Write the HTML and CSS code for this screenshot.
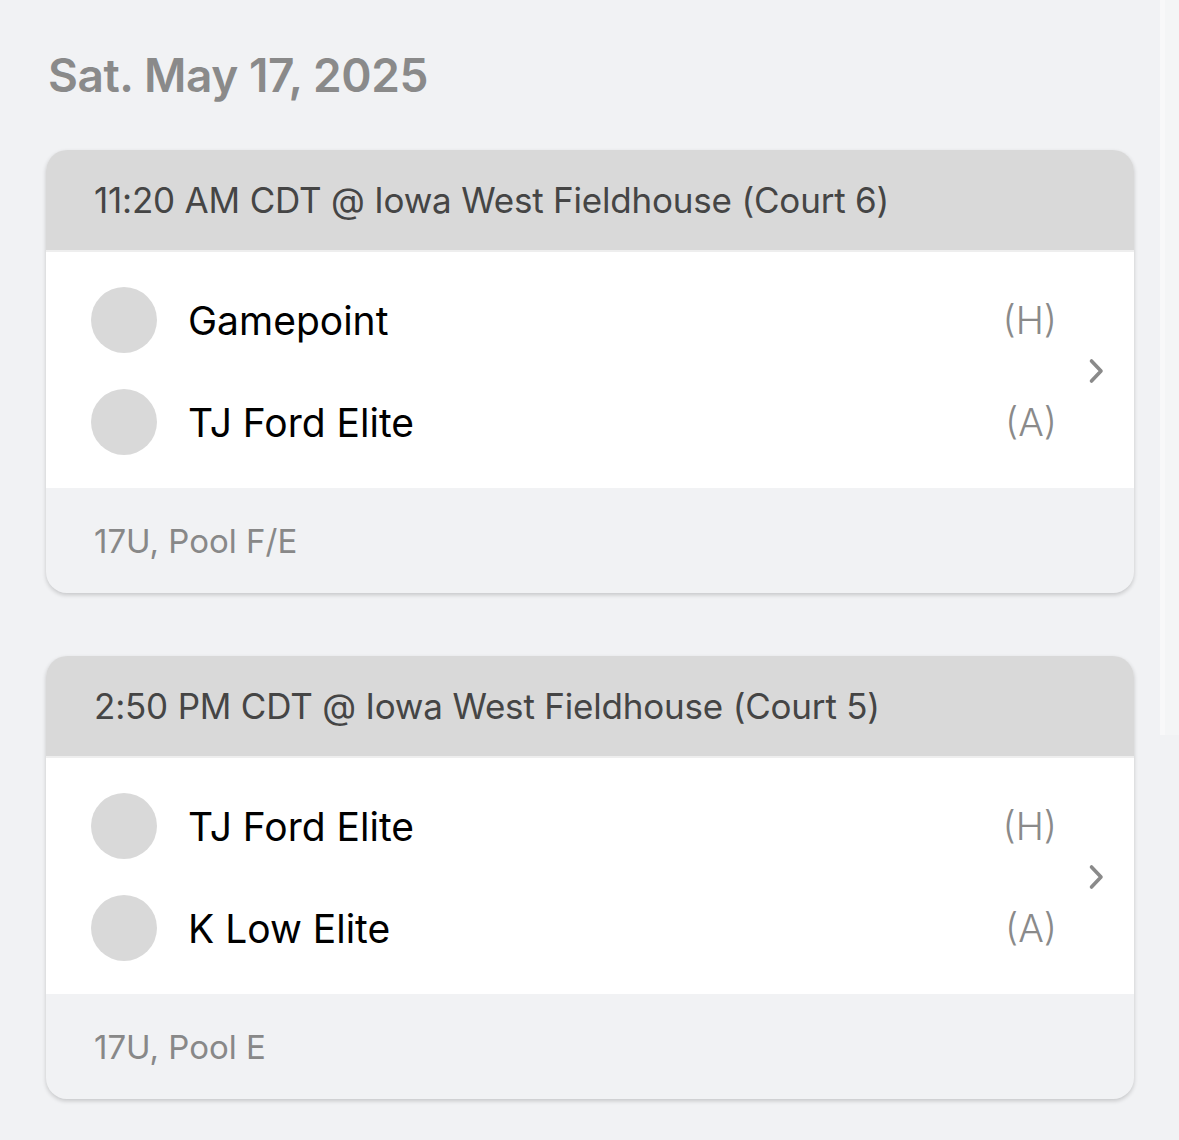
FILE: index.html
```html
<!DOCTYPE html>
<html lang="en">
<head>
    <meta charset="UTF-8">
    <link rel="stylesheet" href="styles.css">
</head>
<body>

    <div class="page">
        <div class="schedule">
            <h2 class="day">Sat. May 17, 2025</h2>

            <div class="game">
                <div class="game-head">11:20 AM CDT @ Iowa West Fieldhouse (Court 6)</div>
                <div class="game-body">
                    <div class="teams">
                        <div class="team">
                            <span class="logo"></span>
                            <span class="name">Gamepoint</span>
                            <span class="side">(H)</span>
                        </div>
                        <div class="team">
                            <span class="logo"></span>
                            <span class="name">TJ Ford Elite</span>
                            <span class="side">(A)</span>
                        </div>
                    </div>
                    <svg class="chevron" width="18" height="28" viewBox="0 0 18 28">
                        <path d="M4.5 4 L14 14 L4.5 24" fill="none" stroke="#8a8a8a" stroke-width="3.6" stroke-linecap="round" stroke-linejoin="round"/>
                    </svg>
                </div>
                <div class="game-foot">17U, Pool F/E</div>
            </div>

            <div class="game">
                <div class="game-head">2:50 PM CDT @ Iowa West Fieldhouse (Court 5)</div>
                <div class="game-body">
                    <div class="teams">
                        <div class="team">
                            <span class="logo"></span>
                            <span class="name">TJ Ford Elite</span>
                            <span class="side">(H)</span>
                        </div>
                        <div class="team">
                            <span class="logo"></span>
                            <span class="name">K Low Elite</span>
                            <span class="side">(A)</span>
                        </div>
                    </div>
                    <svg class="chevron" width="18" height="28" viewBox="0 0 18 28">
                        <path d="M4.5 4 L14 14 L4.5 24" fill="none" stroke="#8a8a8a" stroke-width="3.6" stroke-linecap="round" stroke-linejoin="round"/>
                    </svg>
                </div>
                <div class="game-foot">17U, Pool E</div>
            </div>
        </div>

        <div class="track"></div>
    </div>

</body>
</html>
```

FILE: styles.css
```css
        body {
            margin: 0;
            background-color: #f1f2f4;
            font-family: "Inter", "Lato", sans-serif;
        }

        .page {
            display: flex;
            align-items: flex-start;
        }

        .schedule {
            flex: 1;
            padding: 0 26px 20px 46px;
        }

        .track {
            width: 19px;
            height: 735px;
            background-color: #f4f5f6;
            border-left: 5px solid #f8f8f9;
            box-sizing: border-box;
        }

        .day {
            margin: 0;
            padding: 47px 0 0 2px;
            height: 150px;
            box-sizing: border-box;
            font-size: 46px;
            font-weight: 600;
            line-height: 56px;
            letter-spacing: -0.4px;
            color: #8a8a8a;
        }

        .game {
            background-color: #f1f2f4;
            border-radius: 21px;
            overflow: hidden;
            box-shadow: 0 2px 4px rgba(0, 0, 0, 0.18);
            margin-bottom: 63px;
        }

        .game:last-child {
            margin-bottom: 0;
        }

        .game-head {
            height: 100px;
            padding-left: 48px;
            display: flex;
            align-items: center;
            background-color: #d9d9d9;
            border-bottom: 2px solid #eeeeee;
            font-size: 35px;
            letter-spacing: -0.2px;
            color: #454545;
        }

        .game-body {
            display: flex;
            align-items: center;
            background-color: #ffffff;
            padding: 35px 29px 33px 45px;
        }

        .teams {
            flex: 1;
            display: flex;
            flex-direction: column;
            gap: 36px;
            padding-right: 30px;
        }

        .team {
            display: flex;
            align-items: center;
            height: 66px;
        }

        .logo {
            width: 66px;
            height: 66px;
            border-radius: 50%;
            background-color: #d9d9d9;
            margin-right: 31px;
        }

        .name {
            flex: 1;
            font-size: 39px;
            color: #000000;
        }

        .side {
            font-size: 38px;
            font-weight: 300;
            color: #8a8a8a;
        }

        .game-foot {
            height: 105px;
            padding-left: 48px;
            display: flex;
            align-items: center;
            font-size: 33px;
            color: #888888;
        }
```
